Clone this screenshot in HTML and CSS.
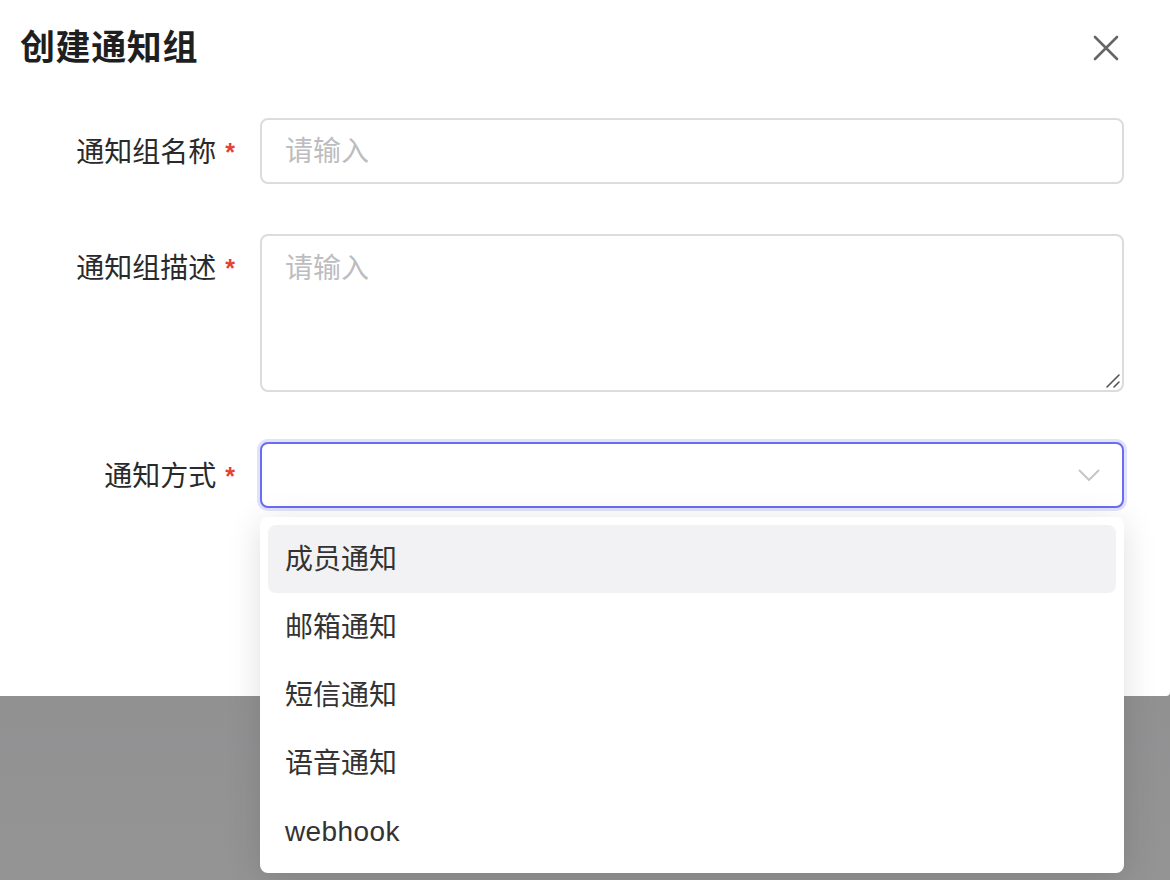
FILE: index.html
```html
<!DOCTYPE html>
<html lang="zh-CN">
<head>
<meta charset="utf-8">
<title>创建通知组</title>
<link rel="stylesheet" href="styles.css">
</head>
<body>
<div class="page">
  <div class="dialog">
    <header class="dlg-head">
      <h1 class="dlg-title">创建通知组</h1>
      <button class="dlg-close" type="button" aria-label="关闭">
        <svg width="26" height="26" viewBox="0 0 26 26"><path d="M2 2 L24 24 M24 2 L2 24" stroke="#666" stroke-width="2.6" stroke-linecap="round" fill="none"/></svg>
      </button>
    </header>
    <form class="form">
      <div class="row">
        <label class="label">通知组名称<span class="req">*</span></label>
        <div class="field"><input class="input" type="text" placeholder="请输入"></div>
      </div>
      <div class="row">
        <label class="label">通知组描述<span class="req">*</span></label>
        <div class="field ta-wrap">
          <textarea class="textarea" placeholder="请输入"></textarea>
          <svg class="ta-grip" width="16" height="16" viewBox="0 0 16 16"><path d="M2 14 L14 2 M9 14 L14 9" stroke="#555" stroke-width="1.6" stroke-linecap="round" fill="none"/></svg>
        </div>
      </div>
      <div class="row">
        <label class="label">通知方式<span class="req">*</span></label>
        <div class="field">
          <div class="select">
            <svg class="chev" width="22" height="12" viewBox="0 0 22 12"><path d="M1 1 L11 11 L21 1" stroke="#c6c6c8" stroke-width="2" fill="none"/></svg>
          </div>
        </div>
      </div>
    </form>
  </div>
  <ul class="dropdown">
    <li class="opt active">成员通知</li>
    <li class="opt">邮箱通知</li>
    <li class="opt">短信通知</li>
    <li class="opt">语音通知</li>
    <li class="opt latin">webhook</li>
  </ul>
</div>
</body>
</html>
```

FILE: styles.css
```css
* { box-sizing: border-box; }
html, body { margin: 0; padding: 0; }
body {
  width: 1170px;
  height: 880px;
  overflow: hidden;
  font-family: "Liberation Sans", "Noto Sans CJK SC", sans-serif;
  background: linear-gradient(180deg, #868688 0%, #949495 100%);
}
.page {
  position: relative;
  width: 1170px;
  height: 880px;
}
.dialog {
  width: 1170px;
  height: 696px;
  background: #fff;
  border-bottom-right-radius: 4px;
}
.dlg-head {
  height: 94px;
  display: flex;
  align-items: center;
  justify-content: space-between;
  padding: 2px 51px 0 20px;
}
.dlg-title {
  margin: 0;
  font-size: 35px;
  font-weight: 700;
  color: #1f1f1f;
  line-height: 48px;
  letter-spacing: 0.6px;
}
.dlg-close {
  border: 0;
  background: none;
  padding: 0;
  width: 26px;
  height: 26px;
  display: flex;
  cursor: pointer;
}
.form {
  padding-top: 24px;
  display: flex;
  flex-direction: column;
  gap: 50px;
}
.row {
  display: grid;
  grid-template-columns: 260px 864px;
}
.label {
  height: 66px;
  line-height: 68px;
  text-align: right;
  padding-right: 25px;
  font-size: 28px;
  color: #2a2a2a;
}
.req {
  color: #e5413b;
  font-size: 25px;
  font-weight: 700;
  margin-left: 9px;
  vertical-align: 1px;
}
.field { position: relative; }
.input, .textarea {
  display: block;
  width: 864px;
  border: 2px solid #dcdcdf;
  border-radius: 8px;
  font-family: inherit;
  font-size: 28px;
  color: #333;
  outline: none;
  background: #fff;
}
.input {
  height: 66px;
  padding: 2px 23px 0;
}
.textarea {
  height: 158px;
  padding: 13px 23px;
  line-height: 40px;
  resize: none;
}
.input::placeholder, .textarea::placeholder { color: #bdbdbf; }
.ta-grip {
  position: absolute;
  right: 3px;
  bottom: 3px;
}
.select {
  height: 66px;
  border: 2px solid #6a6cf2;
  border-radius: 8px;
  box-shadow: 0 0 0 3px rgba(106, 108, 242, 0.2);
  background: #fff;
  display: flex;
  align-items: center;
  justify-content: flex-end;
  padding-right: 22px;
}
.chev { display: block; }
.dropdown {
  position: absolute;
  left: 260px;
  top: 517px;
  width: 864px;
  margin: 0;
  padding: 8px;
  list-style: none;
  background: #fff;
  border-radius: 8px;
  box-shadow: 0 6px 34px rgba(0, 0, 0, 0.13);
}
.opt {
  height: 68px;
  line-height: 70px;
  padding-left: 17px;
  border-radius: 8px;
  font-size: 28px;
  color: #333;
}
.opt.latin { letter-spacing: 0.4px; }
.opt.active { background: #f2f2f4; }
```
